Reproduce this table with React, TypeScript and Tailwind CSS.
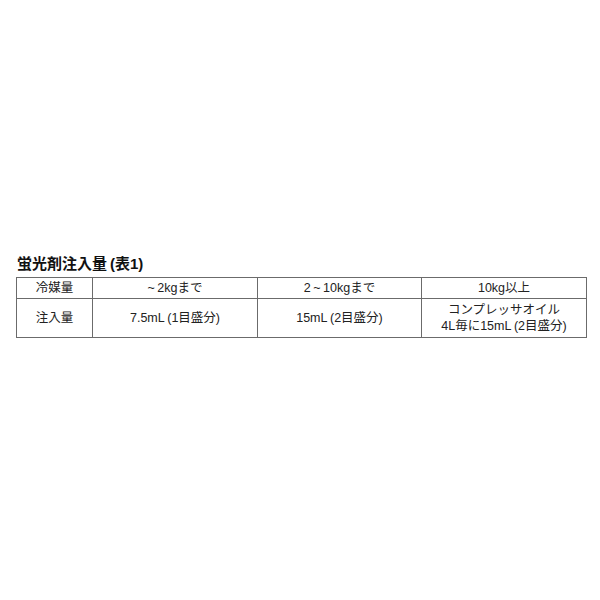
export default function App() {
  const cell =
    "border border-[#6b6b6b] text-center align-middle font-normal px-1";

  return (
    <div className="w-[600px] h-[600px] bg-white pt-[254px] pl-4 font-['Liberation_Sans','Noto_Sans_CJK_JP',sans-serif] text-[#222]">
      {/* Title */}
      <h2 className="text-[15px] font-bold leading-5 text-[#111] mb-[3px] pl-[1px]">
        蛍光剤注入量{"\u2009"}(表1)
      </h2>

      {/* Table */}
      <table className="w-[570px] border-collapse text-[12.5px] leading-4 table-fixed">
        <colgroup>
          <col className="w-[76px]" />
          <col className="w-[165px]" />
          <col className="w-[164px]" />
          <col className="w-[165px]" />
        </colgroup>
        <tbody>
          <tr className="h-[21px]">
            <td className={cell}>冷媒量</td>
            <td className={cell}>~{"\u2009"}2kgまで</td>
            <td className={cell}>2{"\u2009"}~{"\u2009"}10kgまで</td>
            <td className={cell}>10kg以上</td>
          </tr>
          <tr className="h-[39px]">
            <td className={cell}>注入量</td>
            <td className={cell}>7.5mL{"\u2009"}(1目盛分)</td>
            <td className={cell}>15mL{"\u2009"}(2目盛分)</td>
            <td className={cell}>
              コンプレッサオイル
              <br />
              4L毎に15mL{"\u2009"}(2目盛分)
            </td>
          </tr>
        </tbody>
      </table>
    </div>
  );
}
